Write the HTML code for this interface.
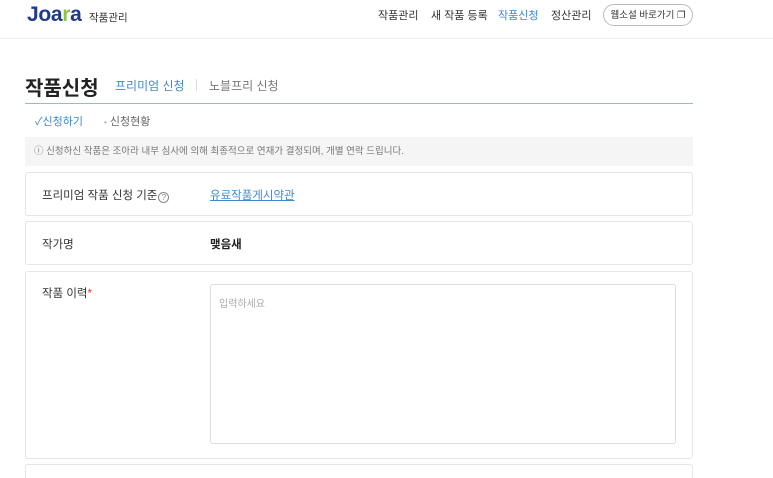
<!DOCTYPE html>
<html><head><meta charset="utf-8"><style>
*{margin:0;padding:0;box-sizing:border-box}
html,body{width:773px;height:478px;overflow:hidden}
body{background:#fff;font-family:"Liberation Sans","Noto Sans CJK KR",sans-serif;color:#333;position:relative}
.a{position:absolute;white-space:nowrap}
.card{position:absolute;left:25px;width:668px;border:1px solid #e6e6e6;border-radius:3px;background:#fff}
</style></head><body>
<div class="a" style="left:27px;top:3px;font-size:21px;font-weight:bold;color:#1f3a8a;letter-spacing:-0.3px;font-family:'Liberation Sans',sans-serif">Joa<span style="color:#8cc63f">r</span>a</div>
<div class="a" style="left:89px;top:10px;font-size:10.5px;color:#333">작품관리</div>
<div class="a" style="left:378px;top:7px;font-size:11px;color:#333">작품관리</div>
<div class="a" style="left:431px;top:7px;font-size:11px;color:#333">새 작품 등록</div>
<div class="a" style="left:498px;top:7px;font-size:11px;color:#3d8ad1">작품신청</div>
<div class="a" style="left:551px;top:7px;font-size:11px;color:#333">정산관리</div>
<div class="a" style="left:603px;top:4px;width:90px;height:22px;border:1px solid #bbb;border-radius:11px;font-size:9.5px;line-height:21px;text-align:center;color:#333">웹소설 바로가기 ❐</div>
<div class="a" style="left:0;top:38px;width:773px;height:1px;background:#eee"></div>
<div class="a" style="left:25px;top:72px;font-size:20px;font-weight:bold;color:#222">작품신청</div>
<div class="a" style="left:115px;top:77px;font-size:12px;color:#3d8ad1">프리미엄 신청</div>
<div class="a" style="left:196px;top:79px;width:1px;height:12px;background:#ddd"></div>
<div class="a" style="left:209px;top:77px;font-size:12px;color:#777">노블프리 신청</div>
<div class="a" style="left:25px;top:103px;width:668px;height:1px;background:#9db8cc"></div>
<div class="a" style="left:35px;top:113px;font-size:11px;color:#3d8ad1">✓신청하기</div>
<div class="a" style="left:104px;top:113px;font-size:11px;color:#666"><span style="font-size:8px;color:#aaa">•</span> 신청현황</div>
<div class="a" style="left:25px;top:137px;width:668px;height:29px;background:#f5f5f5;font-size:9.5px;line-height:29px;padding-left:9px;color:#777">ⓘ 신청하신 작품은 조아라 내부 심사에 의해 최종적으로 연재가 결정되며, 개별 연락 드립니다.</div>
<div class="card" style="top:172px;height:44px"></div>
<div class="a" style="left:42px;top:187px;font-size:11.5px;color:#333">프리미엄 작품 신청 기준<span style="display:inline-block;width:11px;height:11px;border:1px solid #888;border-radius:50%;font-size:8px;line-height:9px;text-align:center;color:#888;margin-left:1px;vertical-align:-1px">?</span></div>
<div class="a" style="left:210px;top:187px;font-size:11.5px;color:#3d8ad1;text-decoration:underline">유료작품게시약관</div>
<div class="card" style="top:221px;height:44px"></div>
<div class="a" style="left:42px;top:236px;font-size:11.5px;color:#333">작가명</div>
<div class="a" style="left:210px;top:236px;font-size:11.5px;color:#222;font-weight:bold">맺음새</div>
<div class="card" style="top:271px;height:188px"></div>
<div class="a" style="left:42px;top:285px;font-size:11.5px;color:#333">작품 이력<span style="color:#e33">*</span></div>
<div class="a" style="left:210px;top:284px;width:466px;height:160px;border:1px solid #ddd;border-radius:3px;font-size:10px;color:#aaa;padding:10px 8px">입력하세요</div>
<div class="card" style="top:464px;height:30px"></div>
</body></html>
